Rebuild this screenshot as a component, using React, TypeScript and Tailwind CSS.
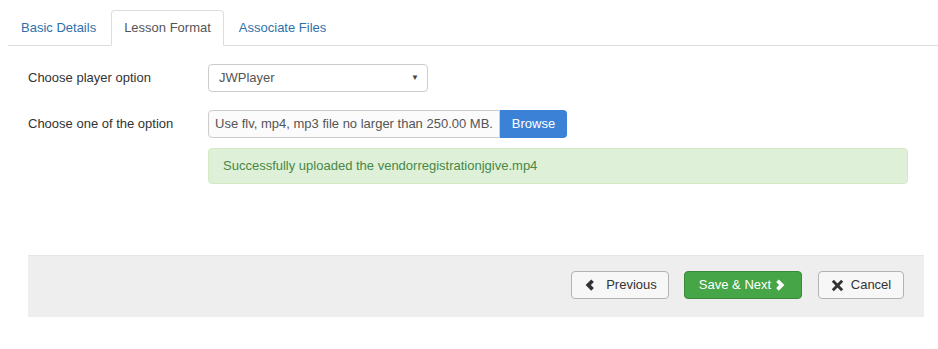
import React from 'react';

const tabs = ['Basic Details', 'Lesson Format', 'Associate Files'];

function ChevronLeft({ className }: { className?: string }) {
  return (
    <svg viewBox="0 0 16 16" className={className} fill="currentColor">
      <path d="M11 0.5 L14.5 4 L10.5 8 L14.5 12 L11 15.5 L3.5 8 Z" />
    </svg>
  );
}

function ChevronRight({ className }: { className?: string }) {
  return (
    <svg viewBox="0 0 16 16" className={className} fill="currentColor">
      <path d="M5 0.5 L1.5 4 L5.5 8 L1.5 12 L5 15.5 L12.5 8 Z" />
    </svg>
  );
}

function Cross({ className }: { className?: string }) {
  return (
    <svg viewBox="0 0 16 16" className={className} fill="currentColor">
      <path d="M3.5 1 L8 5.5 L12.5 1 L15 3.5 L10.5 8 L15 12.5 L12.5 15 L8 10.5 L3.5 15 L1 12.5 L5.5 8 L1 3.5 Z" />
    </svg>
  );
}

export default function App() {
  return (
    <div className="min-h-[349px] w-[938px] bg-white pl-2 pt-[10px] font-['Liberation_Sans',Arial,sans-serif] text-[13px] leading-[18px] text-[#333]">
      {/* tabs */}
      <div className="flex border-b border-[#ddd]">
        {tabs.map((t, i) =>
          i === 1 ? (
            <div
              key={t}
              className="-mb-px mr-[2px] rounded-t-[4px] border border-[#ddd] border-b-white bg-white px-3 py-2 text-[#555]"
            >
              {t}
            </div>
          ) : (
            <div
              key={t}
              className="-mb-px mr-[2px] rounded-t-[4px] border border-transparent px-3 py-2 text-[#3071a9]"
            >
              {t}
            </div>
          )
        )}
      </div>

      <div className="pl-5 pt-[18px]">
        {/* player option */}
        <div className="flex">
          <div className="w-[180px] pt-[5px]">Choose player option</div>
          <div className="flex h-[28px] w-[220px] items-center justify-between rounded-[4px] border border-[#ccc] bg-white pl-[10px] pr-[8px] text-[#555]">
            <span>JWPlayer</span>
            <span className="text-[8px] leading-none text-[#444]">▼</span>
          </div>
        </div>

        {/* file */}
        <div className="mt-[18px] flex">
          <div className="w-[180px] pt-[5px]">Choose one of the option</div>
          <div>
            <div className="flex h-[28px]">
              <div className="flex w-[292px] items-center whitespace-nowrap rounded-l-[4px] border border-[#ccc] bg-[#fbfbfb] px-[6px] text-[#555]">
                Use flv, mp4, mp3 file no larger than 250.00 MB.
              </div>
              <div className="flex w-[67px] items-center justify-center rounded-r-[4px] bg-[#3b82d6] text-white">
                Browse
              </div>
            </div>
            <div className="mt-[10px] w-[700px] rounded-[4px] border border-[#d6e9c6] bg-[#dff0d8] px-[14px] py-2 text-[#468847]">
              Successfully uploaded the vendorregistrationjgive.mp4
            </div>
          </div>
        </div>

        {/* actions */}
        <div className="mt-[71px] flex w-[896px] justify-end border-t border-[#e5e5e5] bg-[#eeeeee] px-5 pb-[18px] pt-[15px]">
          <div className="flex h-[28px] w-[98px] items-center justify-center gap-[11px] rounded-[4px] border border-[#b3b3b3] bg-[#f7f7f7] text-[#333]">
            <ChevronLeft className="h-[12px] w-[12px]" />
            <span>Previous</span>
          </div>
          <div className="ml-[15px] flex h-[28px] w-[118px] items-center justify-center gap-[4px] rounded-[4px] border border-[#3b8a3b] bg-[#46a546] text-white">
            <span>Save &amp; Next</span>
            <ChevronRight className="h-[12px] w-[12px]" />
          </div>
          <div className="ml-[16px] flex h-[28px] w-[86px] items-center justify-center gap-[7px] rounded-[4px] border border-[#b3b3b3] bg-[#f7f7f7] text-[#333]">
            <Cross className="h-[13px] w-[13px]" />
            <span>Cancel</span>
          </div>
        </div>
      </div>
    </div>
  );
}
